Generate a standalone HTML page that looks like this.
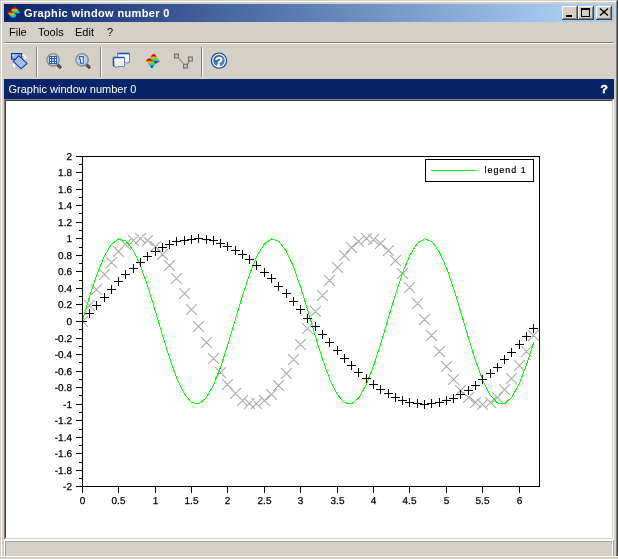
<!DOCTYPE html>
<html><head><meta charset="utf-8"><style>
html,body{margin:0;padding:0;}
body{width:618px;height:559px;position:relative;overflow:hidden;background:#d4d0c8;font-family:"Liberation Sans",sans-serif;}
.a{position:absolute;}
#w{position:absolute;left:0;top:0;width:618px;height:559px;will-change:transform;background:#d4d0c8;}
</style></head><body>
<div id="w">
<div class="a" style="left:1px;top:1px;width:615px;height:1px;background:#fff"></div>
<div class="a" style="left:1px;top:1px;width:1px;height:555px;background:#fff"></div>
<div class="a" style="left:616px;top:1px;width:1px;height:555px;background:#808080"></div>
<div class="a" style="left:617px;top:0;width:1px;height:556px;background:#404040"></div>
<div class="a" style="left:0;top:556px;width:618px;height:1px;background:#fff"></div>
<div class="a" style="left:4px;top:4px;width:610px;height:18px;background:linear-gradient(to right,#0a246a 0,#a6caf0 556px)"></div>
<div class="a" style="left:24px;top:6px;font-size:11px;font-weight:bold;color:#fff;line-height:14px;white-space:nowrap;letter-spacing:0.36px">Graphic window number 0</div>
<div class="a" style="left:562px;top:6px;width:16px;height:14px;background:#d4d0c8;box-shadow:inset -1px -1px #404040,inset 1px 1px #fff,inset -2px -2px #808080"></div><div class="a" style="left:578px;top:6px;width:16px;height:14px;background:#d4d0c8;box-shadow:inset -1px -1px #404040,inset 1px 1px #fff,inset -2px -2px #808080"></div><div class="a" style="left:596px;top:6px;width:16px;height:14px;background:#d4d0c8;box-shadow:inset -1px -1px #404040,inset 1px 1px #fff,inset -2px -2px #808080"></div>
<div class="a" style="left:9px;top:25px;font-size:11px;color:#000;line-height:14px">File</div>
<div class="a" style="left:38px;top:25px;font-size:11px;color:#000;line-height:14px">Tools</div>
<div class="a" style="left:75px;top:25px;font-size:11px;color:#000;line-height:14px">Edit</div>
<div class="a" style="left:107px;top:25px;font-size:11px;color:#000;line-height:14px">?</div>
<div class="a" style="left:4px;top:42px;width:610px;height:1px;background:#808080"></div>
<div class="a" style="left:4px;top:43px;width:610px;height:1px;background:#fff"></div>
<div class="a" style="left:36px;top:47px;width:1px;height:30px;background:#808080"></div>
<div class="a" style="left:37px;top:47px;width:1px;height:30px;background:#fff"></div>
<div class="a" style="left:100px;top:47px;width:1px;height:30px;background:#808080"></div>
<div class="a" style="left:101px;top:47px;width:1px;height:30px;background:#fff"></div>
<div class="a" style="left:201px;top:47px;width:1px;height:30px;background:#808080"></div>
<div class="a" style="left:202px;top:47px;width:1px;height:30px;background:#fff"></div>
<div class="a" style="left:4px;top:79px;width:610px;height:20px;background:#0a246a"></div>
<div class="a" style="left:8.5px;top:82px;font-size:11px;color:#fff;line-height:14px;white-space:nowrap">Graphic window number 0</div>

<div class="a" style="left:4px;top:99px;width:610px;height:441px;background:#fff"></div>
<div class="a" style="left:4px;top:99px;width:609px;height:1px;background:#808080"></div>
<div class="a" style="left:4px;top:99px;width:1px;height:440px;background:#808080"></div>
<div class="a" style="left:5px;top:100px;width:607px;height:1px;background:#404040"></div>
<div class="a" style="left:5px;top:100px;width:1px;height:438px;background:#404040"></div>
<div class="a" style="left:5px;top:538px;width:608px;height:1px;background:#d4d0c8"></div>
<div class="a" style="left:612px;top:100px;width:1px;height:439px;background:#d4d0c8"></div>
<div class="a" style="left:4px;top:540px;width:610px;height:17px;background:#fff"></div>
<div class="a" style="left:5px;top:541px;width:607px;height:15px;background:#d4d0c8;border-top:1px solid #a0a0a0;border-left:1px solid #a0a0a0;box-sizing:border-box"></div>
<div class="a" style="left:613px;top:540px;width:1px;height:16px;background:#a0a0a0"></div>
<svg class="a" style="left:0;top:0" width="618" height="559" viewBox="0 0 618 559"><defs>
<linearGradient id="gL" gradientUnits="userSpaceOnUse" x1="0" y1="8.5" x2="0" y2="18">
<stop offset="0" stop-color="#b00000"/><stop offset="0.2" stop-color="#e01800"/><stop offset="0.38" stop-color="#e8c800"/><stop offset="0.52" stop-color="#60d040"/><stop offset="0.7" stop-color="#00c8d8"/><stop offset="0.86" stop-color="#0040e0"/><stop offset="1" stop-color="#0000a0"/></linearGradient>
<linearGradient id="gR" gradientUnits="userSpaceOnUse" x1="0" y1="4.2" x2="0" y2="13.3">
<stop offset="0" stop-color="#b00000"/><stop offset="0.2" stop-color="#e01800"/><stop offset="0.38" stop-color="#e8c800"/><stop offset="0.52" stop-color="#60d040"/><stop offset="0.7" stop-color="#00c8d8"/><stop offset="0.86" stop-color="#0040e0"/><stop offset="1" stop-color="#0000a0"/></linearGradient>
<linearGradient id="gTB" x1="0" y1="0" x2="1" y2="0"><stop offset="0" stop-color="#0a246a"/><stop offset="1" stop-color="#a6caf0"/></linearGradient>
<radialGradient id="gMag" cx="0.4" cy="0.4" r="0.6"><stop offset="0" stop-color="#e6f0fa"/><stop offset="1" stop-color="#9cc0e8"/></radialGradient>
<linearGradient id="gWin" x1="0" y1="0" x2="0" y2="1"><stop offset="0" stop-color="#ffffff"/><stop offset="1" stop-color="#e0e0e8"/></linearGradient>
<radialGradient id="gHelp" cx="0.35" cy="0.3" r="0.8"><stop offset="0" stop-color="#2a5aa8"/><stop offset="1" stop-color="#6a94cc"/></radialGradient>
</defs>
<g transform="translate(3.9 2.75) scale(0.92)"><g>
<path d="M4.13 10.71C5.51 8.46 9.06 7.87 10.31 9.37L13.31 13.58L9.92 18.03Z" fill="url(#gL)" stroke="url(#gL)" stroke-width="0.6" stroke-linejoin="round"/>
<path d="M8.35 8.35C9.65 4.33 12.20 3.35 13.19 4.92L17.40 11.34L13.58 13.31Z" fill="url(#gR)" stroke="url(#gR)" stroke-width="0.6" stroke-linejoin="round"/>
<circle cx="14.4" cy="11.6" r="0.7" fill="#a02020"/>
</g></g>
<g>
<rect x="566" y="15" width="6" height="2" fill="#000"/>
<path d="M581.5 8.5H589.5V16.5H581.5Z" fill="none" stroke="#000" stroke-width="1" shape-rendering="crispEdges"/>
<path d="M582 9.5H589" stroke="#000" stroke-width="1" shape-rendering="crispEdges"/>
<path d="M600 8.5L608 15.5M608 8.5L600 15.5" stroke="#000" stroke-width="1.5"/>
</g>
<linearGradient id="gRect" x1="0" y1="0" x2="1" y2="1"><stop offset="0" stop-color="#c8d8f4"/><stop offset="1" stop-color="#6c8ed0"/></linearGradient>
<rect x="11.6" y="53.6" width="10" height="5.6" fill="url(#gRect)" stroke="#0e3fa0" stroke-width="1.2"/>
<rect x="12.6" y="54.4" width="1" height="1" fill="#fff"/>
<path d="M12.6 67.8H17.6" stroke="#a4b2d0" stroke-width="1.1"/>
<path d="M13.9 64.6V67.2H15.5" fill="none" stroke="#fff" stroke-width="1.3"/>
<path d="M12 65.2L13.9 63.4L15.8 65.2Z" fill="#fff"/>
<path d="M22.3 55.1C24.4 55.1 25.3 56 25.3 57.4" fill="none" stroke="#fff" stroke-width="1.3"/>
<path d="M23.6 57.2H27L25.3 59.2Z" fill="#fff"/>
<path d="M13.5 61.4L18.8 55.9L26.9 63.4L21 68.7Z" fill="#a8bce2" stroke="#0e3fa0" stroke-width="1.2"/>
<path d="M14.7 61.4L18.8 57.2L25.6 63.4L21 67.5Z" fill="none" stroke="#c8d4ee" stroke-width="0.5"/><path d="M57.7 64.8L60.1 67.1" stroke="#404040" stroke-width="3" stroke-linecap="round"/><path d="M58.5 65.6L59.7 66.7" stroke="#8a8a8a" stroke-width="1"/><circle cx="53.1" cy="59.8" r="6.2" fill="url(#gMag)" stroke="#8a8a8a" stroke-width="1.3"/><g shape-rendering="crispEdges"><rect x="49" y="56" width="8" height="8" fill="#2f5ea8"/><rect x="50" y="57" width="1" height="1" fill="#fff"/><rect x="52" y="57" width="2" height="1" fill="#fff"/><rect x="55" y="57" width="1" height="1" fill="#fff"/><rect x="50" y="59" width="1" height="2" fill="#fff"/><rect x="52" y="59" width="2" height="2" fill="#a8c8ec"/><rect x="55" y="59" width="1" height="2" fill="#fff"/><rect x="50" y="62" width="1" height="1" fill="#fff"/><rect x="52" y="62" width="2" height="1" fill="#fff"/><rect x="55" y="62" width="1" height="1" fill="#fff"/></g><path d="M86.69999999999999 64.8L89.1 67.1" stroke="#404040" stroke-width="3" stroke-linecap="round"/><path d="M87.5 65.6L88.69999999999999 66.7" stroke="#8a8a8a" stroke-width="1"/><circle cx="82.1" cy="59.8" r="6.2" fill="url(#gMag)" stroke="#8a8a8a" stroke-width="1.3"/><path d="M79.3 56.599999999999994H83.3V63.199999999999996H80.5V59.199999999999996H79.3Z" fill="#fff" stroke="#2a58a6" stroke-width="1.1"/><path d="M117.5 53.5H129.5V62.5H128L127 63.8L126 62.5H117.5Z" fill="url(#gWin)" stroke="#7088b8" stroke-width="1"/>
<path d="M117.5 53.5H129.5" stroke="#2050a8" stroke-width="1.6"/>
<path d="M113.5 57.5H124.5V66.5H118L116 68L115.5 66.5H113.5Z" fill="url(#gWin)" stroke="#7088b8" stroke-width="1"/>
<path d="M113.5 57.5H124.5M113.5 57.5V66" stroke="#2050a8" stroke-width="1.6"/><g transform="translate(142 50)"><g>
<path d="M4.13 10.71C5.51 8.46 9.06 7.87 10.31 9.37L13.31 13.58L9.92 18.03Z" fill="url(#gL)" stroke="url(#gL)" stroke-width="0.6" stroke-linejoin="round"/>
<path d="M8.35 8.35C9.65 4.33 12.20 3.35 13.19 4.92L17.40 11.34L13.58 13.31Z" fill="url(#gR)" stroke="url(#gR)" stroke-width="0.6" stroke-linejoin="round"/>
<circle cx="14.4" cy="11.6" r="0.7" fill="#a02020"/>
</g></g><g fill="none" stroke="#6e6e6e" stroke-width="1.15">
<rect x="174.6" y="54.1" width="3.8" height="3.8"/>
<rect x="183.6" y="64.2" width="3.8" height="3.8"/>
<rect x="188.5" y="57.1" width="3.8" height="3.8"/>
</g>
<path d="M179 58.6L183.4 63.6" stroke="#6e6e6e" stroke-width="1.1" stroke-dasharray="1.1 0.7"/>
<path d="M187.8 63.6L189.2 61.4" stroke="#6e6e6e" stroke-width="1.1"/><circle cx="219" cy="60.6" r="7.6" fill="url(#gHelp)" stroke="#1f4f9c" stroke-width="1.2"/>
<circle cx="219" cy="60.6" r="6.3" fill="none" stroke="#fff" stroke-width="1.1"/>
<text x="219" y="65.6" text-anchor="middle" font-family="Liberation Sans" font-weight="bold" font-size="13" fill="#fff" stroke="#fff" stroke-width="0.4">?</text>
<text transform="translate(600.6 93.4) scale(1.2 1)" font-family="Liberation Sans" font-weight="bold" font-size="10" fill="#fff" stroke="#fff" stroke-width="0.45">?</text>
<path d="M82.5 156.5H539.5V486.5H82.5Z" fill="none" stroke="#000" stroke-width="1" shape-rendering="crispEdges"/><path d="M76 156.5H82 M79 164.5H82 M76 172.5H82 M79 180.5H82 M76 189.5H82 M79 197.5H82 M76 205.5H82 M79 213.5H82 M76 222.5H82 M79 230.5H82 M76 238.5H82 M79 247.5H82 M76 255.5H82 M79 263.5H82 M76 271.5H82 M79 280.5H82 M76 288.5H82 M79 296.5H82 M76 304.5H82 M79 313.5H82 M76 321.5H82 M79 329.5H82 M76 338.5H82 M79 346.5H82 M76 354.5H82 M79 362.5H82 M76 371.5H82 M79 379.5H82 M76 387.5H82 M79 395.5H82 M76 404.5H82 M79 412.5H82 M76 420.5H82 M79 429.5H82 M76 437.5H82 M79 445.5H82 M76 453.5H82 M79 462.5H82 M76 470.5H82 M79 478.5H82 M76 486.5H82 M82.5 487V493 M118.5 487V493 M155.5 487V493 M191.5 487V493 M227.5 487V493 M264.5 487V493 M300.5 487V493 M337.5 487V493 M373.5 487V493 M409.5 487V493 M446.5 487V493 M482.5 487V493 M519.5 487V493" stroke="#000" stroke-width="1" shape-rendering="crispEdges"/><g font-family="Liberation Sans" font-size="10" fill="#000" stroke="#000" stroke-width="0.25" text-rendering="geometricPrecision"><text x="72" y="160" text-anchor="end">2</text><text x="72" y="176" text-anchor="end">1.8</text><text x="72" y="193" text-anchor="end">1.6</text><text x="72" y="209" text-anchor="end">1.4</text><text x="72" y="226" text-anchor="end">1.2</text><text x="72" y="242" text-anchor="end">1</text><text x="72" y="259" text-anchor="end">0.8</text><text x="72" y="275" text-anchor="end">0.6</text><text x="72" y="292" text-anchor="end">0.4</text><text x="72" y="308" text-anchor="end">0.2</text><text x="72" y="325" text-anchor="end">0</text><text x="72" y="342" text-anchor="end">-0.2</text><text x="72" y="358" text-anchor="end">-0.4</text><text x="72" y="375" text-anchor="end">-0.6</text><text x="72" y="391" text-anchor="end">-0.8</text><text x="72" y="408" text-anchor="end">-1</text><text x="72" y="424" text-anchor="end">-1.2</text><text x="72" y="441" text-anchor="end">-1.4</text><text x="72" y="457" text-anchor="end">-1.6</text><text x="72" y="474" text-anchor="end">-1.8</text><text x="72" y="490" text-anchor="end">-2</text><text x="82.5" y="504" text-anchor="middle">0</text><text x="118.5" y="504" text-anchor="middle">0.5</text><text x="155.5" y="504" text-anchor="middle">1</text><text x="191.5" y="504" text-anchor="middle">1.5</text><text x="227.5" y="504" text-anchor="middle">2</text><text x="264.5" y="504" text-anchor="middle">2.5</text><text x="300.5" y="504" text-anchor="middle">3</text><text x="337.5" y="504" text-anchor="middle">3.5</text><text x="373.5" y="504" text-anchor="middle">4</text><text x="409.5" y="504" text-anchor="middle">4.5</text><text x="446.5" y="504" text-anchor="middle">5</text><text x="482.5" y="504" text-anchor="middle">5.5</text><text x="519.5" y="504" text-anchor="middle">6</text></g><clipPath id="cp"><rect x="82" y="156" width="458" height="331"/></clipPath><g clip-path="url(#cp)"><path d="M77.10 316.10L87.90 326.90M77.10 326.90L87.90 316.10M84.10 300.10L94.90 310.90M84.10 310.90L94.90 300.10M91.10 284.10L101.90 294.90M91.10 294.90L101.90 284.10M99.10 269.10L109.90 279.90M99.10 279.90L109.90 269.10M106.10 257.10L116.90 267.90M106.10 267.90L116.90 257.10M113.10 246.10L123.90 256.90M113.10 256.90L123.90 246.10M120.10 239.10L130.90 249.90M120.10 249.90L130.90 239.10M128.10 235.10L138.90 245.90M128.10 245.90L138.90 235.10M135.10 233.10L145.90 243.90M135.10 243.90L145.90 233.10M142.10 235.10L152.90 245.90M142.10 245.90L152.90 235.10M150.10 241.10L160.90 251.90M150.10 251.90L160.90 241.10M157.10 249.10L167.90 259.90M157.10 259.90L167.90 249.10M164.10 260.10L174.90 270.90M164.10 270.90L174.90 260.10M171.10 273.10L181.90 283.90M171.10 283.90L181.90 273.10M179.10 288.10L189.90 298.90M179.10 298.90L189.90 288.10M186.10 304.10L196.90 314.90M186.10 314.90L196.90 304.10M193.10 321.10L203.90 331.90M193.10 331.90L203.90 321.10M201.10 337.10L211.90 347.90M201.10 347.90L211.90 337.10M208.10 353.10L218.90 363.90M208.10 363.90L218.90 353.10M215.10 367.10L225.90 377.90M215.10 377.90L225.90 367.10M222.10 379.10L232.90 389.90M222.10 389.90L232.90 379.10M230.10 388.10L240.90 398.90M230.10 398.90L240.90 388.10M237.10 395.10L247.90 405.90M237.10 405.90L247.90 395.10M244.10 398.10L254.90 408.90M244.10 408.90L254.90 398.10M251.10 398.10L261.90 408.90M251.10 408.90L261.90 398.10M259.10 395.10L269.90 405.90M259.10 405.90L269.90 395.10M266.10 389.10L276.90 399.90M266.10 399.90L276.90 389.10M273.10 380.10L283.90 390.90M273.10 390.90L283.90 380.10M281.10 368.10L291.90 378.90M281.10 378.90L291.90 368.10M288.10 354.10L298.90 364.90M288.10 364.90L298.90 354.10M295.10 339.10L305.90 349.90M295.10 349.90L305.90 339.10M302.10 323.10L312.90 333.90M302.10 333.90L312.90 323.10M310.10 306.10L320.90 316.90M310.10 316.90L320.90 306.10M317.10 290.10L327.90 300.90M317.10 300.90L327.90 290.10M324.10 275.10L334.90 285.90M324.10 285.90L334.90 275.10M332.10 262.10L342.90 272.90M332.10 272.90L342.90 262.10M339.10 250.10L349.90 260.90M339.10 260.90L349.90 250.10M346.10 242.10L356.90 252.90M346.10 252.90L356.90 242.10M353.10 236.10L363.90 246.90M353.10 246.90L363.90 236.10M361.10 233.10L371.90 243.90M361.10 243.90L371.90 233.10M368.10 234.10L378.90 244.90M368.10 244.90L378.90 234.10M375.10 238.10L385.90 248.90M375.10 248.90L385.90 238.10M383.10 245.10L393.90 255.90M383.10 255.90L393.90 245.10M390.10 255.10L400.90 265.90M390.10 265.90L400.90 255.10M397.10 268.10L407.90 278.90M397.10 278.90L407.90 268.10M404.10 282.10L414.90 292.90M404.10 292.90L414.90 282.10M412.10 298.10L422.90 308.90M412.10 308.90L422.90 298.10M419.10 314.10L429.90 324.90M419.10 324.90L429.90 314.10M426.10 330.10L436.90 340.90M426.10 340.90L436.90 330.10M434.10 346.10L444.90 356.90M434.10 356.90L444.90 346.10M441.10 361.10L451.90 371.90M441.10 371.90L451.90 361.10M448.10 374.10L458.90 384.90M448.10 384.90L458.90 374.10M455.10 385.10L465.90 395.90M455.10 395.90L465.90 385.10M463.10 392.10L473.90 402.90M463.10 402.90L473.90 392.10M470.10 397.10L480.90 407.90M470.10 407.90L480.90 397.10M477.10 399.10L487.90 409.90M477.10 409.90L487.90 399.10M485.10 397.10L495.90 407.90M485.10 407.90L495.90 397.10M492.10 392.10L502.90 402.90M492.10 402.90L502.90 392.10M499.10 384.10L509.90 394.90M499.10 394.90L509.90 384.10M506.10 373.10L516.90 383.90M506.10 383.90L516.90 373.10M514.10 360.10L524.90 370.90M514.10 370.90L524.90 360.10M521.10 346.10L531.90 356.90M521.10 356.90L531.90 346.10M528.10 330.10L538.90 340.90M528.10 340.90L538.90 330.10" stroke="#acacac" stroke-width="1.2" fill="none"/><polyline points="82.16,321.53 89.44,297.08 96.73,274.82 104.01,256.73 111.30,244.42 118.58,239.01 125.87,240.96 133.15,250.12 140.44,265.65 147.72,286.17 155.01,309.86 162.29,334.58 169.58,358.14 176.86,378.43 184.15,393.64 191.43,402.40 198.72,403.94 206.00,398.12 213.29,385.46 220.57,367.09 227.86,344.65 235.14,320.14 242.43,295.76 249.71,273.68 257.00,255.87 264.28,243.93 271.57,238.92 278.86,241.29 286.14,250.83 293.43,266.68 300.71,287.44 308.00,311.23 315.28,335.95 322.57,359.38 329.85,379.43 337.14,394.31 344.42,402.68 351.71,403.81 358.99,397.59 366.28,384.57 373.56,365.92 380.85,343.31 388.13,318.75 395.42,294.44 402.70,272.55 409.99,255.03 417.27,243.46 424.56,238.86 431.84,241.64 439.13,251.56 446.41,267.73 453.70,288.71 460.99,312.62 468.27,337.32 475.56,360.61 482.84,380.42 490.13,394.96 497.41,402.94 504.70,403.65 511.98,397.03 519.27,383.66 526.55,364.74 533.84,341.96" stroke="#00ff00" stroke-width="1" fill="none" shape-rendering="crispEdges"/><path d="M78 321h9v1h-9zM82 317h1v9h-1zM85 313h9v1h-9zM89 309h1v9h-1zM92 305h9v1h-9zM96 301h1v9h-1zM100 297h9v1h-9zM104 293h1v9h-1zM107 289h9v1h-9zM111 285h1v9h-1zM114 281h9v1h-9zM118 277h1v9h-1zM121 274h9v1h-9zM125 270h1v9h-1zM129 268h9v1h-9zM133 264h1v9h-1zM136 262h9v1h-9zM140 258h1v9h-1zM143 256h9v1h-9zM147 252h1v9h-1zM151 251h9v1h-9zM155 247h1v9h-1zM158 247h9v1h-9zM162 243h1v9h-1zM165 244h9v1h-9zM169 240h1v9h-1zM172 241h9v1h-9zM176 237h1v9h-1zM180 240h9v1h-9zM184 236h1v9h-1zM187 239h9v1h-9zM191 235h1v9h-1zM194 238h9v1h-9zM198 234h1v9h-1zM202 239h9v1h-9zM206 235h1v9h-1zM209 240h9v1h-9zM213 236h1v9h-1zM216 243h9v1h-9zM220 239h1v9h-1zM223 246h9v1h-9zM227 242h1v9h-1zM231 250h9v1h-9zM235 246h1v9h-1zM238 254h9v1h-9zM242 250h1v9h-1zM245 259h9v1h-9zM249 255h1v9h-1zM252 265h9v1h-9zM256 261h1v9h-1zM260 272h9v1h-9zM264 268h1v9h-1zM267 278h9v1h-9zM271 274h1v9h-1zM274 286h9v1h-9zM278 282h1v9h-1zM282 293h9v1h-9zM286 289h1v9h-1zM289 301h9v1h-9zM293 297h1v9h-1zM296 309h9v1h-9zM300 305h1v9h-1zM303 318h9v1h-9zM307 314h1v9h-1zM311 326h9v1h-9zM315 322h1v9h-1zM318 334h9v1h-9zM322 330h1v9h-1zM325 342h9v1h-9zM329 338h1v9h-1zM333 350h9v1h-9zM337 346h1v9h-1zM340 358h9v1h-9zM344 354h1v9h-1zM347 365h9v1h-9zM351 361h1v9h-1zM354 372h9v1h-9zM358 368h1v9h-1zM362 378h9v1h-9zM366 374h1v9h-1zM369 384h9v1h-9zM373 380h1v9h-1zM376 389h9v1h-9zM380 385h1v9h-1zM384 393h9v1h-9zM388 389h1v9h-1zM391 397h9v1h-9zM395 393h1v9h-1zM398 400h9v1h-9zM402 396h1v9h-1zM405 402h9v1h-9zM409 398h1v9h-1zM413 403h9v1h-9zM417 399h1v9h-1zM420 404h9v1h-9zM424 400h1v9h-1zM427 403h9v1h-9zM431 399h1v9h-1zM435 402h9v1h-9zM439 398h1v9h-1zM442 400h9v1h-9zM446 396h1v9h-1zM449 398h9v1h-9zM453 394h1v9h-1zM456 394h9v1h-9zM460 390h1v9h-1zM464 390h9v1h-9zM468 386h1v9h-1zM471 385h9v1h-9zM475 381h1v9h-1zM478 379h9v1h-9zM482 375h1v9h-1zM486 373h9v1h-9zM490 369h1v9h-1zM493 367h9v1h-9zM497 363h1v9h-1zM500 359h9v1h-9zM504 355h1v9h-1zM507 352h9v1h-9zM511 348h1v9h-1zM515 344h9v1h-9zM519 340h1v9h-1zM522 336h9v1h-9zM526 332h1v9h-1zM529 328h9v1h-9zM533 324h1v9h-1z" fill="#000" shape-rendering="crispEdges"/></g><rect x="425.5" y="159.5" width="108" height="22" fill="#fff" stroke="#000" stroke-width="1" shape-rendering="crispEdges"/><path d="M431 170.5H477" stroke="#00ff00" stroke-width="1" shape-rendering="crispEdges"/><text x="484.5" y="173" font-family="Liberation Sans" font-size="9" letter-spacing="0.95" fill="#000" stroke="#000" stroke-width="0.2">legend 1</text></svg>
</div>
</body></html>
